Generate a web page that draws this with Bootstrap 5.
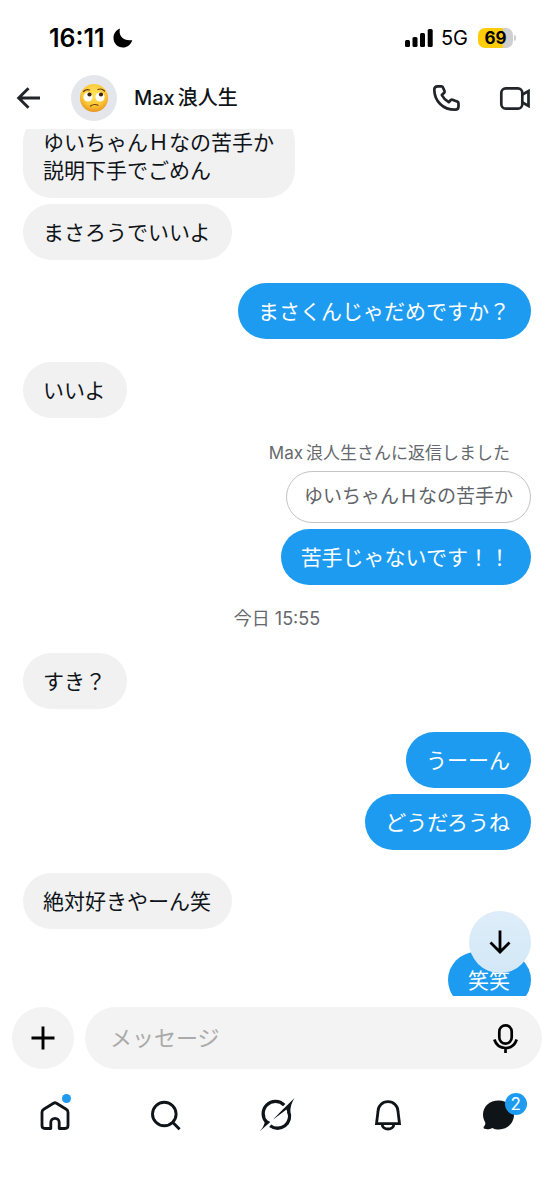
<!DOCTYPE html>
<html lang="ja">
<head>
<meta charset="utf-8">
<meta name="viewport" content="width=device-width, initial-scale=1">
<title>Max浪人生</title>
<link href="https://cdn.jsdelivr.net/npm/bootstrap@5.3.0/dist/css/bootstrap.min.css" rel="stylesheet">
<style>
  body { font-family: Inter, "Noto Sans CJK JP", sans-serif; color: #0f1419; background: #fff; }
  svg { display: block; overflow: visible; }
  button { color: inherit; }
  .status { height: 72px; padding: 3px 38px 0 49px; color: #000; }
  .clock { font-size: 25px; font-weight: 600; line-height: 30px; }
  .network { font-size: 20px; margin: 0 10px 0 8px; }
  .battery { width: 35px; height: 20px; border-radius: 7px; font-size: 17px; font-weight: 700; line-height: 20px;
    background: linear-gradient(90deg, #ffcc0a 70%, #cfcfcf 70%); }
  .battery-tip { width: 2px; height: 6px; margin-left: 1px; border-radius: 0 2px 2px 0; background: #cfcfcf; }
  .topbar { height: 57px; padding: 0 24px 5px 16px; }
  .avatar { width: 46px; height: 46px; background: #e5e6eb; margin: 0 17px 0 30px; }
  .peer { font-size: 20px; font-weight: 500; }
  .latin { margin-right: 3px; }
  .calls { gap: 40px; }
  .thread { min-height: 0; flex: 1 1 0; }
  .messages { padding: 0 23px; gap: 23px; margin-top: -15px; }
  .burst { gap: 6px; }
  .bubble { padding: 15px 21px 13px 20px; border-radius: 28px; font-size: 21px; line-height: 28px; max-width: 80%; }
  .bubble-in { background: #f1f1f1; }
  .bubble-out { background: #1d9bf0; color: #fff; }
  .bubble-quote { padding: 11px 17px; border: 1px solid #c4c4c4; border-radius: 26px; font-size: 19px; line-height: 28px; color: #606468; }
  .note { font-size: 18px; line-height: 22px; color: #65696d; }
  .reply-note { font-size: 17px; line-height: 24px; padding-right: 21px; }
  .jump { right: 23px; bottom: 23px; width: 62px; height: 62px; background: linear-gradient(#deedf9, #d3e8f7); }
  .composer { padding: 11px 12px 0; gap: 11px; }
  .round-btn { width: 62px; height: 62px; background: #f3f3f3; }
  .field { height: 62px; background: #f3f3f3; padding: 0 24px 0 25px; }
  .field input { font-size: 22px; min-width: 0; outline: 0; }
  .field input::placeholder { color: #aaa; }
  .tabs { height: 130px; padding-top: 28px; }
  .tabs svg { width: 36px; height: 36px; }
  .dot { width: 9px; height: 9px; background: #1d9bf0; top: -3px; right: 2px; }
  .count { width: 22px; height: 22px; background: #1d9bf0; font-size: 17px; line-height: 22px; top: -4px; right: -10px; }
</style>
</head>
<body>
<div class="d-flex flex-column vh-100 overflow-hidden">
  <div class="status d-flex align-items-center flex-shrink-0">
    <span class="clock">16:11</span>
    <svg class="ms-2" width="20" height="20" viewBox="0 0 20 20" aria-hidden="true"><path fill="currentColor" d="M7 .5C5.300 6.500 9 13.500 19.300 12.200 17.500 17 14 19.500 10 19.500 4.500 19.500.5 15.300.5 10 .5 5.500 3 2 7 .5Z"/></svg>
    <svg class="ms-auto" width="28" height="18" viewBox="0 0 28 18" aria-hidden="true"><g fill="currentColor"><rect y="11" width="5" height="7" rx="1.500"/><rect x="7.500" y="8" width="5" height="10" rx="1.500"/><rect x="15" y="4" width="5" height="14" rx="1.500"/><rect x="22.700" width="5" height="18" rx="1.500"/></g></svg>
    <span class="network">5G</span>
    <span class="battery text-center">69</span><span class="battery-tip"></span>
  </div>

  <header class="topbar d-flex align-items-center flex-shrink-0">
    <button class="btn p-0 border-0" aria-label="戻る">
      <svg width="25" height="24" viewBox="0 0 25 24" fill="none" stroke="currentColor" stroke-width="2.900"><path d="M24 12H3M12.500 2.300 2.700 12l9.800 9.700"/></svg>
    </button>
    <div class="avatar rounded-circle d-flex align-items-center justify-content-center">
      <svg width="28" height="28" viewBox="0 0 28 28" role="img" aria-label="アイコン">
        <defs><radialGradient id="face" cx=".5" cy=".35" r=".7"><stop offset="0" stop-color="#ffe35a"/><stop offset=".6" stop-color="#fcc736"/><stop offset="1" stop-color="#e48a1c"/></radialGradient></defs>
        <circle cx="14" cy="14" r="14" fill="url(#face)"/>
        <circle cx="8" cy="13" r="4.600" fill="#fff"/><circle cx="20" cy="13" r="4.600" fill="#fff"/>
        <circle cx="9.500" cy="10.500" r="2.100" fill="#42230d"/><circle cx="21" cy="10.500" r="2.100" fill="#42230d"/>
        <path d="M3.500 7.500Q6 4.800 9.500 6M18 5.500q3.500-1.500 6.500 1.500M10.500 22q3.500-2.500 7.500-.8" fill="none" stroke="#6b3a10" stroke-width="1.200" stroke-linecap="round"/>
      </svg>
    </div>
    <span class="peer"><span class="latin">Max</span>浪人生</span>
    <div class="calls d-flex align-items-center ms-auto">
      <button class="btn p-0 border-0" aria-label="音声通話">
        <svg width="27" height="26" viewBox="0 0 27 26" fill="none" stroke="currentColor" stroke-width="2.700" stroke-linejoin="round"><path d="M4.500 1.300H8.500Q9.600 1.300 10 2.400L11.500 6Q11.900 7 11.200 7.700L8.800 10Q11 14.500 15.700 17.200L17.800 15Q18.500 14.400 19.400 14.700L24 16.400Q25.500 16.900 25.500 18.200V21.500Q25.500 24.700 22 24.700C10 24.700 1.300 16 1.300 4.500Q1.300 1.300 4.500 1.300Z"/></svg>
      </button>
      <button class="btn p-0 border-0" aria-label="ビデオ通話">
        <svg width="30" height="23" viewBox="0 0 30 23" fill="none" stroke="currentColor" stroke-width="2.700"><rect x="1.300" y="1.300" width="21" height="20.400" rx="4.500"/><path d="M22.500 7.500 28.500 4V19l-6-3.500"/></svg>
      </button>
    </div>
  </header>

  <main class="thread position-relative overflow-hidden">
    <div class="messages d-flex flex-column">
      <div class="burst d-flex flex-column align-items-start">
        <div class="bubble bubble-in">ゆいちゃんＨなの苦手か<br>説明下手でごめん</div>
        <div class="bubble bubble-in">まさろうでいいよ</div>
      </div>
      <div class="burst d-flex flex-column align-items-end">
        <div class="bubble bubble-out">まさくんじゃだめですか？</div>
      </div>
      <div class="burst d-flex flex-column align-items-start">
        <div class="bubble bubble-in">いいよ</div>
      </div>
      <div class="burst d-flex flex-column align-items-end">
        <div class="note reply-note"><span class="latin">Max</span>浪人生さんに返信しました</div>
        <div class="bubble-quote">ゆいちゃんＨなの苦手か</div>
        <div class="bubble bubble-out">苦手じゃないです！！</div>
      </div>
      <div class="note text-center">今日 15:55</div>
      <div class="burst d-flex flex-column align-items-start">
        <div class="bubble bubble-in">すき？</div>
      </div>
      <div class="burst d-flex flex-column align-items-end">
        <div class="bubble bubble-out">うーーん</div>
        <div class="bubble bubble-out">どうだろうね</div>
      </div>
      <div class="burst d-flex flex-column align-items-start">
        <div class="bubble bubble-in">絶対好きやーん笑</div>
      </div>
      <div class="burst d-flex flex-column align-items-end">
        <div class="bubble bubble-out">笑笑</div>
      </div>
    </div>
    <button class="jump btn border-0 p-0 rounded-circle position-absolute d-flex align-items-center justify-content-center" aria-label="最新のメッセージへ">
      <svg width="22" height="24" viewBox="0 0 22 24" fill="none" stroke="#000" stroke-width="2.800"><path d="M11 .5V22M1.500 12.500 11 22l9.500-9.500"/></svg>
    </button>
  </main>

  <form class="composer d-flex flex-shrink-0">
    <button type="button" class="round-btn btn border-0 p-0 rounded-circle flex-shrink-0 d-flex align-items-center justify-content-center" aria-label="追加">
      <svg width="24" height="24" viewBox="0 0 24 24" stroke="#000" stroke-width="2.900"><path d="M12 .5v23M.5 12h23"/></svg>
    </button>
    <div class="field rounded-pill flex-grow-1 d-flex align-items-center">
      <input class="border-0 bg-transparent p-0 flex-grow-1" type="text" placeholder="メッセージ" aria-label="メッセージ">
      <button type="button" class="btn border-0 p-0" aria-label="音声メッセージ">
        <svg width="25" height="29" viewBox="0 0 25 29" fill="none" stroke="#000" stroke-width="2.700"><rect x="6.300" y="1.300" width="12.400" height="18.400" rx="6.200"/><path d="M1.300 15.500C3 20.500 7 24 12.500 24S22 20.500 23.700 15.500M12.500 24v5"/></svg>
      </button>
    </div>
  </form>

  <nav class="tabs row g-0 align-items-start flex-shrink-0" aria-label="メイン">
    <div class="col d-flex justify-content-center"><a href="#" class="position-relative text-reset" aria-label="ホーム">
      <svg viewBox="0 0 36 36" fill="none" stroke="currentColor" stroke-width="2.800" stroke-linejoin="round"><path d="M16.500 6.300Q18 5.200 19.500 6.300L29.200 12.300Q31 13.400 31 15.200V28.500Q31 31.500 28 31.500H22.200V25.500A4.200 4.200 0 0 0 13.800 25.500V31.500H8Q5 31.500 5 28.500V15.200Q5 13.400 6.800 12.300Z"/></svg>
      <span class="dot rounded-circle position-absolute"></span></a></div>
    <div class="col d-flex justify-content-center"><a href="#" class="text-reset" aria-label="検索">
      <svg viewBox="0 0 36 36" fill="none" stroke="currentColor" stroke-width="2.900"><circle cx="16.300" cy="17" r="11.800"/><path d="m24.600 25.300 7 7"/></svg></a></div>
    <div class="col d-flex justify-content-center"><a href="#" class="text-reset" aria-label="Grok">
      <svg viewBox="0 0 36 36"><g fill="none" stroke="currentColor" stroke-width="3.300"><path d="M7.600 25.200A12 12 0 0 1 25.200 8.200"/><path d="M29.600 14.500A12 12 0 0 1 11.200 28.700"/></g><path fill="currentColor" d="M35.500 1Q31.500 7 31.200 15L28.700 16.500 27.500 12.500 13.800 22.800 24.500 11.700Q29 7.500 35.500 1ZM.5 34.500Q5 30 5.900 24.500L8.600 23.600 11.300 25Z"/></svg></a></div>
    <div class="col d-flex justify-content-center"><a href="#" class="text-reset" aria-label="通知">
      <svg viewBox="0 0 36 36" fill="none" stroke="currentColor" stroke-width="2.800"><path d="M6.500 26.700 8 14.500A10 9.800 0 0 1 28 14.500L29.500 26.700ZM12.200 27.200a5.800 4.800 0 0 0 11.600 0"/></svg></a></div>
    <div class="col d-flex justify-content-center"><a href="#" class="position-relative text-reset" aria-label="チャット">
      <svg viewBox="0 0 36 36"><path fill="currentColor" d="M17.500 3.500C26.500 3.500 33 9.500 33 17.500 33 26 26.500 32.500 18 32.500 15.500 32.500 13.300 32 11.500 31 9 32.300 5.500 32.700 3.500 31.800 2.300 31.200 2.300 30.300 3 29.500 4.300 28 4.600 26.600 4.100 25.200 2.700 22.700 2 20.300 2 17.500 2 9.500 8.500 3.500 17.500 3.500Z"/></svg>
      <span class="count rounded-circle position-absolute text-center text-white">2</span></a></div>
  </nav>
</div>
<script src="https://cdn.jsdelivr.net/npm/bootstrap@5.3.0/dist/js/bootstrap.bundle.min.js"></script>
</body>
</html>
